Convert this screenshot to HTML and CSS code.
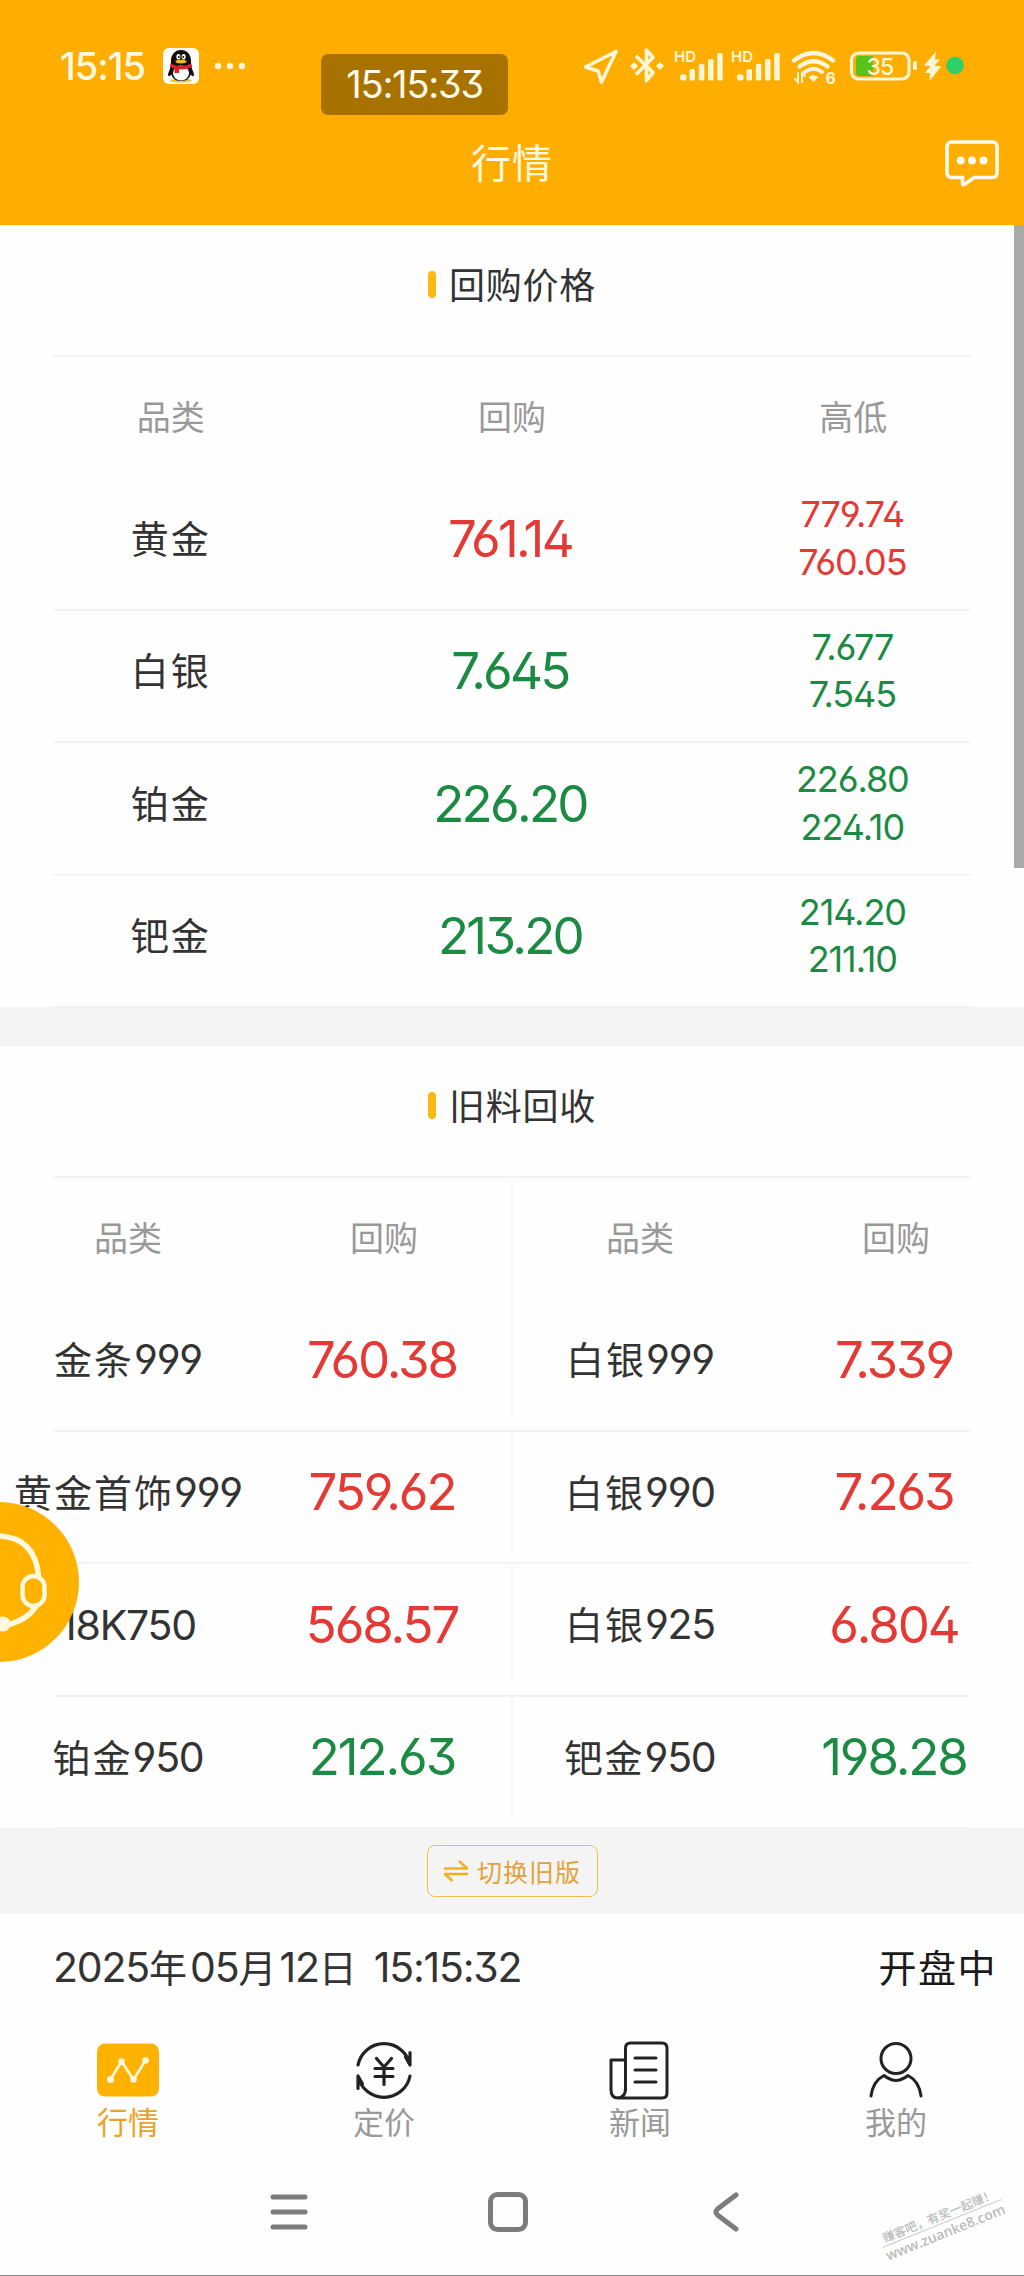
FILE: index.html
```html
<!DOCTYPE html>
<html lang="zh-CN">
<head>
<meta charset="utf-8">
<title>行情</title>
<link rel="stylesheet" href="styles.css">
</head>
<body>
<div class="app">
  <header class="top">
    <div class="status">
      <span class="clock">15:15</span>
      <svg class="qq" width="36" height="36" viewBox="0 0 36 36">
        <rect width="36" height="36" rx="6" fill="#fffdf6"/>
        <ellipse cx="18" cy="32.6" rx="11" ry="2" fill="#f2c23c"/>
        <path d="M8 18 L5 26 Q5 30 8 27 L10 24Z M28 18 L31 26 Q31 30 28 27 L26 24Z" fill="#111"/>
        <path d="M18 2C11 2 7.500 8 8 14L7.500 22C8 30 12 33 18 33s10-3 10.500-11L28 14C28.500 8 25 2 18 2Z" fill="#111"/>
        <ellipse cx="18" cy="25" rx="8" ry="7.500" fill="#fff"/>
        <path d="M7.500 15.500Q18 20.500 28.500 15.500L29 19Q18 24 7 19Z" fill="#d8232a"/>
        <path d="M11.500 19.500h4.500v5.500h-4.500z" fill="#d8232a"/>
        <ellipse cx="15.400" cy="8.800" rx="2" ry="2.800" fill="#fff"/><ellipse cx="20.600" cy="8.800" rx="2" ry="2.800" fill="#fff"/>
        <circle cx="15.800" cy="9" r="1" fill="#111"/><circle cx="20.200" cy="9" r="1" fill="#111"/>
        <ellipse cx="18" cy="13.600" rx="5.500" ry="1.900" fill="#f5b62c"/>
      </svg>
      <svg class="more" width="32" height="8" viewBox="0 0 32 8"><g fill="#fff6d8"><circle cx="4" cy="4" r="3.200"/><circle cx="16" cy="4" r="3.200"/><circle cx="28" cy="4" r="3.200"/></g></svg>
      <svg class="sys" width="390" height="44" viewBox="0 0 390 44">
        <g fill="none" stroke="#fff6d8" stroke-width="3.600" stroke-linejoin="round" stroke-linecap="round">
          <path d="M36 7.500L5.500 23L18 27L21.500 38Z"/>
          <path d="M57 13L73 28.500L66.500 36.500V6L73 13.500L57 29.500"/>
        </g>
        <g fill="#fff6d8">
          <path d="M54 18l4 4-4 4-4-4zM80 18l4 4-4 4-4-4z"/>
          <text class="hd" x="94" y="18">HD</text>
          <text class="hd" x="151" y="18">HD</text>
          <g id="bars"><rect x="100" y="30.500" width="6.500" height="6" rx="2"/><rect x="109.500" y="25" width="5.500" height="11.500" rx="1.500"/><rect x="118.800" y="20" width="5.500" height="16.500" rx="1.500"/><rect x="128" y="15" width="5.500" height="21.500" rx="1.500"/><rect x="137.200" y="9" width="5.500" height="27.500" rx="1.500"/></g>
          <use href="#bars" x="57"/>
          <path d="M233.500 38L228.500 33Q233.500 29.500 238.500 33Z"/>
          <text class="six" x="245.500" y="39.500">6</text>
          <path d="M356 7.500L344 21.500L350.500 22L345 29H350L349.500 37L361 22.500L354.500 21.500L360 15.500H355Z"/>
          <rect x="333" y="17" width="4" height="9" rx="1.800"/>
        </g>
        <g fill="none" stroke="#fff6d8" stroke-width="4.400" stroke-linecap="round">
          <path d="M214 16.500Q233.500 1.500 253 16.500"/><path d="M219.500 22.500Q233.500 12 247.500 22.500"/><path d="M225 28Q233.500 21.500 242 28" stroke-width="4"/>
          <path d="M218 29v9l-3-3M222 38v-9l3 3" stroke-width="2"/>
        </g>
        <path d="M279 12h14v20h-14q-3 0-3-3v-14q0-3 3-3z" fill="#58c41a"/>
        <rect x="271.500" y="9" width="57.500" height="26" rx="7" fill="none" stroke="#fff6d8" stroke-width="3.200"/>
        <text class="level" x="286.500" y="30.500">35</text>
        <circle cx="375" cy="21.500" r="8.800" fill="#2fcf67"/>
      </svg>
    </div>
    <div class="titlebar">
      <h1>行情</h1>
      <svg class="chat" width="54" height="48" viewBox="0 0 54 48"><path d="M7 2h40q5 0 5 5v25.500q0 5-5 5H29L19.500 44.500Q17.500 45.500 17.500 43V37.500H7q-5 0-5-5V7q0-5 5-5Z" fill="none" stroke="#fffaf0" stroke-width="3.600"/><g fill="#fffaf0"><circle cx="15.700" cy="20.500" r="4"/><circle cx="27" cy="20.500" r="4"/><circle cx="38.500" cy="20.500" r="4"/></g></svg>
    </div>
    <div class="toast">15:15:33</div>
  </header>

  <section class="card">
    <h2>回购价格</h2>
    <div class="row head three"><span>品类</span><span>回购</span><span>高低</span></div>
    <div class="row three up"><span class="name">黄金</span><span class="price">761.14</span><span class="range"><i>779.74</i><i>760.05</i></span></div>
    <div class="row three down"><span class="name">白银</span><span class="price">7.645</span><span class="range"><i>7.677</i><i>7.545</i></span></div>
    <div class="row three down"><span class="name">铂金</span><span class="price">226.20</span><span class="range"><i>226.80</i><i>224.10</i></span></div>
    <div class="row three down"><span class="name">钯金</span><span class="price">213.20</span><span class="range"><i>214.20</i><i>211.10</i></span></div>
  </section>

  <section class="card second">
    <h2>旧料回收</h2>
    <div class="row head four"><span>品类</span><span>回购</span><span>品类</span><span>回购</span></div>
    <div class="row four up"><span class="name">金条<b>999</b></span><span class="price">760.38</span><span class="name">白银<b>999</b></span><span class="price">7.339</span></div>
    <div class="row four up"><span class="name">黄金首饰<b>999</b></span><span class="price">759.62</span><span class="name">白银<b>990</b></span><span class="price">7.263</span></div>
    <div class="row four up"><span class="name"><b>18K750</b></span><span class="price">568.57</span><span class="name">白银<b>925</b></span><span class="price">6.804</span></div>
    <div class="row four down"><span class="name">铂金<b>950</b></span><span class="price">212.63</span><span class="name">钯金<b>950</b></span><span class="price">198.28</span></div>
  </section>

  <div class="switch">
    <button class="old"><svg width="26" height="24" viewBox="0 0 26 24" fill="none" stroke="#f5ae20" stroke-width="2.400" stroke-linejoin="round"><path d="M1 9.500H24L16 2M25 15H2L9.500 22"/></svg>切换旧版</button>
  </div>

  <div class="session"><span class="date"><b>2025</b>年<b>05</b>月<b>12</b>日<b class="time">15:15:32</b></span><span class="open">开盘中</span></div>

  <nav class="tabs">
    <a class="tab on"><svg width="62" height="58" viewBox="0 0 62 58"><rect x="0" y="2.500" width="62" height="53" rx="8" fill="#ffb200"/><path d="M13.500 38.500L24.500 20.500L36.500 38.500L48.500 19.500" fill="none" stroke="#fff8dc" stroke-width="2.600"/><g fill="#fff8dc"><circle cx="13.500" cy="38.500" r="3.500"/><circle cx="24.500" cy="20.500" r="3.200"/><circle cx="36.500" cy="38.500" r="3.200"/><circle cx="48.500" cy="19.500" r="3.300"/></g></svg>行情</a>
    <a class="tab"><svg width="62" height="58" viewBox="0 0 62 58" fill="none" stroke="#222" stroke-width="3.200" stroke-linecap="round" stroke-linejoin="round"><path d="M5 24A26.500 26.500 0 0 1 57 24V11.500M57 24L52.500 16M57 35A26.500 26.500 0 0 1 5 35V47.500M5 35L9.500 43"/><path d="M23.500 17.500L31 26L38.500 17.500M31 26V43.500M22 27.500H40M22 35.500H40"/></svg>定价</a>
    <a class="tab"><svg width="62" height="62" viewBox="0 0 62 62" fill="none" stroke="#222" stroke-width="3" stroke-linejoin="round"><path d="M16.500 52V9Q16.500 4 21.500 4H53Q58 4 58 9V54Q58 59 53 59H9Q2 59 2 51V21H16.500M9 59Q16.500 58 16.500 50"/><path d="M26 19H47M26 31H47M26 43H47" stroke-linecap="round"/></svg>新闻</a>
    <a class="tab"><svg width="62" height="58" viewBox="0 0 62 58" fill="none" stroke="#222" stroke-width="3" stroke-linecap="round" stroke-linejoin="round"><circle cx="31" cy="17.500" r="15"/><path d="M6 55Q8 40 19 34.500Q22 37 26 38.500Q31 40.500 36 38.500Q40 37 43 34.500Q54 40 56 55"/></svg>我的</a>
  </nav>

  <div class="sysnav">
    <svg width="38" height="40" viewBox="0 0 38 40" stroke="#7c7c7c" stroke-width="5" stroke-linecap="round"><path d="M3 5H35M3 20H35M3 35H35"/></svg>
    <svg width="40" height="40" viewBox="0 0 40 40"><rect x="2.500" y="2.500" width="35" height="35" rx="7" fill="none" stroke="#7c7c7c" stroke-width="5"/></svg>
    <svg width="26" height="40" viewBox="0 0 26 40" fill="none" stroke="#7c7c7c" stroke-width="5" stroke-linecap="round" stroke-linejoin="round"><path d="M23 3L4.500 17Q1.500 20 4.500 23L23 37"/></svg>
  </div>

  <div class="scrollbar"></div>
  <a class="service"><svg width="160" height="160" viewBox="0 0 160 160" fill="none" stroke="#fff8dc" stroke-width="5.500"><path d="M43 75Q46 34 81 34Q116 36 119.500 74M117 104Q108 119 84 124" stroke-linecap="round"/><rect x="103.500" y="74" width="22" height="30" rx="11" stroke-width="4.500"/><circle cx="84" cy="122" r="7.500" fill="#fff8dc" stroke="none"/></svg></a>
  <div class="mark"><span>赚客吧，有奖一起赚！</span><span class="url">www.zuanke8.com</span></div>
</div>
</body>
</html>
```
FILE: styles.css
```css
* { box-sizing: border-box; }
body { margin: 0; background: #fff; }
.app {
  position: relative;
  width: 1024px;
  height: 2276px;
  overflow: hidden;
  background: #fefefe;
  border-bottom: 1px solid #888;
  font-family: "Inter", "Noto Sans CJK SC", sans-serif;
  font-feature-settings: "cv03" 1, "cv04" 1, "ss01" 1;
  font-weight: 400;
  color: #333;
}
h1, h2 { margin: 0; font-weight: 400; }
b, i { font-weight: 400; font-style: normal; }
svg { display: block; flex: none; }

.top { position: relative; height: 225px; background: #ffae00; color: #fff8e4; }
.status { display: flex; align-items: center; height: 132px; padding-left: 60px; }
.clock { width: 103px; font-size: 38px; font-weight: 500; letter-spacing: -1px; white-space: nowrap; }
.more { margin-left: 15px; }
.sys { margin-left: 334px; }
.hd { font: 600 15px "Inter", sans-serif; }
.six { font: 700 16px "Inter", sans-serif; }
.level { font: 500 23px "Inter", sans-serif; letter-spacing: -1px; fill: #fff6d8; }
.titlebar { display: grid; grid-template-columns: 1fr auto 1fr; align-items: center; height: 64px; padding-right: 25px; padding-left: 25px; }
.titlebar h1 { grid-column: 2; font-size: 40px; line-height: 64px; letter-spacing: 1px; }
.chat { justify-self: end; }
.toast {
  position: absolute; left: 321px; top: 54px; width: 187px; height: 61px;
  border-radius: 7px; background: #a87200; color: #fffbe8;
  font-size: 38px; line-height: 61px; letter-spacing: -1.200px; text-align: center;
}

.card { height: 782px; }
.second { margin-top: 39px; box-shadow: 0 -39px 0 #f4f4f4; }
.card h2 {
  display: flex; align-items: center; justify-content: center; gap: 13px;
  height: 130px; padding-bottom: 14px; font-size: 36px; letter-spacing: 0.700px;
}
.card h2::before { content: ""; width: 8px; height: 27px; margin-top: 2px; border-radius: 4px; background: #fdb813; }
.row {
  position: relative; display: grid; align-items: center; justify-items: center;
  height: 132.500px; padding-bottom: 9px; white-space: nowrap;
}
.row::after { content: ""; position: absolute; left: 53px; right: 53px; bottom: -1px; height: 2px; background: #f3f3f3; }
.three { grid-template-columns: repeat(3, 1fr); }
.four { grid-template-columns: repeat(4, 256px); }
.four::before { content: ""; position: absolute; left: 511px; top: 1px; bottom: 11px; width: 2px; background: #f7f7f7; }
.head { height: 122px; padding-bottom: 2px; font-size: 34px; color: #999; }
.head::after { top: 0; bottom: auto; }
.four.head::before { bottom: 0; }
.name { display: flex; align-items: baseline; justify-content: center; font-size: 38px; line-height: 50px; letter-spacing: 2px; }
.name b, .date b { font-size: 41px; letter-spacing: -1.200px; }
.price { margin-left: -4px; font-size: 51px; line-height: 62px; letter-spacing: -2.700px; }
.second .price { letter-spacing: -2.100px; }
.range { display: grid; justify-items: center; margin-left: -2px; font-size: 36px; line-height: 47.500px; letter-spacing: -1.100px; }
.up .price, .up .range { color: #e53935; }
.down .price, .down .range { color: #1b8a43; }

.switch { display: flex; align-items: center; justify-content: center; height: 86px; background: #f4f4f4; }
.old {
  display: flex; align-items: center; justify-content: center; gap: 8px;
  width: 171px; height: 52px; padding: 0; border: 1.500px solid #ebbf4e; border-radius: 8px;
  background: none; color: #e3a23c; font: 400 25px "Noto Sans CJK SC", sans-serif; letter-spacing: 1px;
}
.session {
  display: flex; align-items: baseline; justify-content: space-between;
  height: 107px; padding: 28px 27px 0 53px; font-size: 38px; line-height: 50px; letter-spacing: 1.500px;
}
.date { display: flex; align-items: baseline; letter-spacing: 3px; white-space: nowrap; }
.date .time { margin-left: 14px; }
.open { color: #1a1a1a; }
.tabs { display: grid; grid-template-columns: repeat(4, 256px); height: 139px; padding-top: 20px; }
.tab { display: grid; grid-template-rows: 58px 48px; align-items: center; justify-items: center; font-size: 31px; line-height: 48px; color: #999; }
.tab.on { color: #eba22a; }
.sysnav { display: flex; align-items: center; height: 104px; padding-left: 270px; }
.sysnav svg:nth-child(2) { margin-left: 180px; }
.sysnav svg:nth-child(3) { margin-left: 185px; }
.scrollbar { position: absolute; right: 0; top: 225px; width: 10px; height: 643px; background: #aaa; }
.service { position: absolute; left: -81px; top: 1502px; width: 160px; height: 160px; border-radius: 50%; background: #ffb200; }
.mark {
  position: absolute; left: 877px; top: 2206px; width: 130px; display: grid; justify-items: center;
  transform: rotate(-22deg); font: 500 12px/17px "Noto Sans CJK SC", sans-serif; color: #bbb; white-space: nowrap;
}
.mark .url { border-top: 1px solid #ccc; font: 600 14px/18px "Open Sans", sans-serif; }
```
